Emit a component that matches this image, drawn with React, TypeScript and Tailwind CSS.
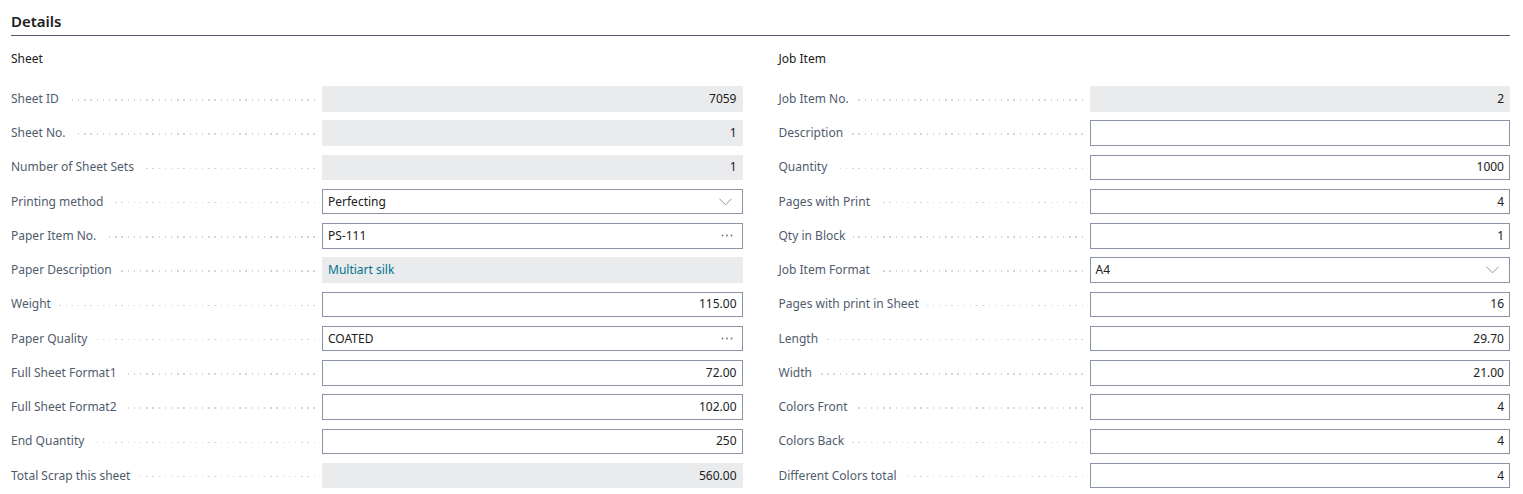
import React from "react";

type Field = {
  label: string;
  value?: string;
  kind: "ro" | "input" | "select" | "lookup";
  align?: "left" | "right";
  link?: boolean;
};

const sheet: Field[] = [
  { label: "Sheet ID", value: "7059", kind: "ro", align: "right" },
  { label: "Sheet No.", value: "1", kind: "ro", align: "right" },
  { label: "Number of Sheet Sets", value: "1", kind: "ro", align: "right" },
  { label: "Printing method", value: "Perfecting", kind: "select", align: "left" },
  { label: "Paper Item No.", value: "PS-111", kind: "lookup", align: "left" },
  { label: "Paper Description", value: "Multiart silk", kind: "ro", align: "left", link: true },
  { label: "Weight", value: "115.00", kind: "input", align: "right" },
  { label: "Paper Quality", value: "COATED", kind: "lookup", align: "left" },
  { label: "Full Sheet Format1", value: "72.00", kind: "input", align: "right" },
  { label: "Full Sheet Format2", value: "102.00", kind: "input", align: "right" },
  { label: "End Quantity", value: "250", kind: "input", align: "right" },
  { label: "Total Scrap this sheet", value: "560.00", kind: "ro", align: "right" },
];

const job: Field[] = [
  { label: "Job Item No.", value: "2", kind: "ro", align: "right" },
  { label: "Description", value: "", kind: "input", align: "left" },
  { label: "Quantity", value: "1000", kind: "input", align: "right" },
  { label: "Pages with Print", value: "4", kind: "input", align: "right" },
  { label: "Qty in Block", value: "1", kind: "input", align: "right" },
  { label: "Job Item Format", value: "A4", kind: "select", align: "left" },
  { label: "Pages with print in Sheet", value: "16", kind: "input", align: "right" },
  { label: "Length", value: "29.70", kind: "input", align: "right" },
  { label: "Width", value: "21.00", kind: "input", align: "right" },
  { label: "Colors Front", value: "4", kind: "input", align: "right" },
  { label: "Colors Back", value: "4", kind: "input", align: "right" },
  { label: "Different Colors total", value: "4", kind: "input", align: "right" },
];

function Chevron() {
  return (
    <svg width="13" height="8" viewBox="0 0 13 8" className="shrink-0">
      <path d="M0.5 0.8 L6.5 6.8 L12.5 0.8" fill="none" stroke="#8a94a6" strokeWidth="1" />
    </svg>
  );
}

function Dots3() {
  return (
    <svg width="12" height="3" viewBox="0 0 12 3" className="shrink-0">
      <circle cx="1.5" cy="1.5" r="0.9" fill="#6b7280" />
      <circle cx="6" cy="1.5" r="0.9" fill="#6b7280" />
      <circle cx="10.5" cy="1.5" r="0.9" fill="#6b7280" />
    </svg>
  );
}

function Row({ f }: { f: Field }) {
  const ro = f.kind === "ro";
  const box = ro
    ? "bg-[#eaebec] border border-transparent"
    : "bg-white border border-[#8a94a6]";
  return (
    <div className="flex items-center h-[25.5px]">
      <div className="w-[311px] shrink-0 flex items-center pr-[7px] h-full">
        <span className="text-[#505c6d] whitespace-nowrap pr-[8px]">{f.label}</span>
        <div className="flex-1 h-[1.5px] mt-[2px] bg-[repeating-linear-gradient(to_left,#d2d5d9_0px,#d2d5d9_1.5px,transparent_1.5px,transparent_6.2px)]" />
      </div>
      <div className={`flex-1 h-full flex items-center px-[5px] ${box}`}>
        <span
          className={`flex-1 whitespace-nowrap ${f.align === "right" ? "text-right" : "text-left"} ${
            f.link ? "text-[#00748f]" : "text-[#212121]"
          }`}
        >
          {f.value}
        </span>
        {f.kind === "select" && <span className="ml-2 mr-[5px] flex items-center"><Chevron /></span>}
        {f.kind === "lookup" && <span className="ml-2 mr-[4px] flex items-center"><Dots3 /></span>}
      </div>
    </div>
  );
}

function Column({ title, fields }: { title: string; fields: Field[] }) {
  return (
    <div className="flex-1 flex flex-col">
      <div className="h-[19px] flex items-center text-[#212121]">{title}</div>
      <div className="flex flex-col gap-[8.77px] mt-[18px]">
        {fields.map((f) => (
          <Row key={f.label} f={f} />
        ))}
      </div>
    </div>
  );
}

export default function App() {
  return (
    <div
      className="w-[1523px] h-[494px] bg-white overflow-hidden pl-[11px] pr-[13px] text-[12px]"
      style={{ fontFamily: '"Noto Sans", "Open Sans", sans-serif' }}
    >
      <div className="pt-[10px] h-[36px] border-b border-[#505c6d] flex items-start">
        <h2 className="text-[15px] font-semibold text-[#212121] leading-[22px]">Details</h2>
      </div>
      <div className="flex gap-[36px] mt-[13px]">
        <Column title="Sheet" fields={sheet} />
        <Column title="Job Item" fields={job} />
      </div>
    </div>
  );
}
